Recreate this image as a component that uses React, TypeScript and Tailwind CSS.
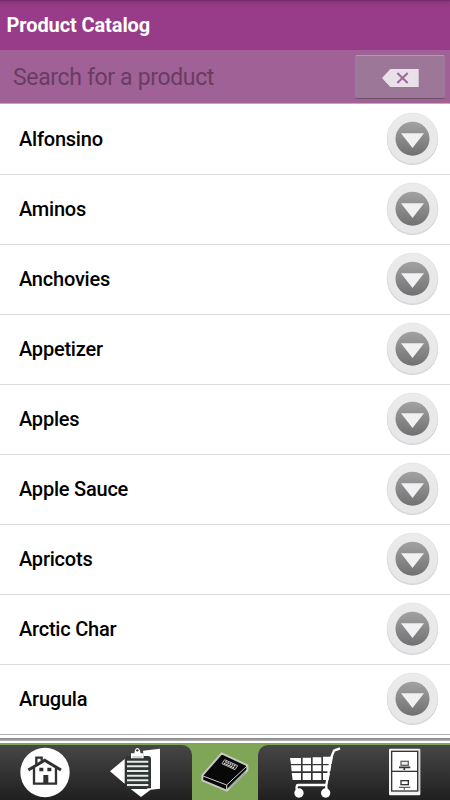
import { useState } from 'react'

const products = [
  'Alfonsino',
  'Aminos',
  'Anchovies',
  'Appetizer',
  'Apples',
  'Apple Sauce',
  'Apricots',
  'Arctic Char',
  'Arugula',
]

function ExpandIcon() {
  return (
    <svg viewBox="0 0 162 162" className="w-[54px] h-[54px]">
      <defs>
        <linearGradient id="ring" x1="0" y1="0" x2="0" y2="1">
          <stop offset="0" stopColor="#ebebeb" />
          <stop offset="1" stopColor="#e7e6e8" />
        </linearGradient>
        <linearGradient id="disc" x1="0" y1="0" x2="0" y2="1">
          <stop offset="0" stopColor="#a2a2a2" />
          <stop offset="1" stopColor="#717171" />
        </linearGradient>
      </defs>
      <circle cx="79.5" cy="82" r="77" fill="#d2d2d2" />
      <circle cx="79.5" cy="79" r="76" fill="url(#ring)" stroke="#e0e0e0" strokeWidth="2" />
      <circle cx="79.5" cy="80" r="51" fill="url(#disc)" />
      <path d="M45 64h69L79.5 108z" fill="#f1f0f2" />
    </svg>
  )
}

function ClearIcon() {
  return (
    <svg viewBox="0 0 111 54" className="w-[37px] h-[18px]">
      <path d="M25 0h85v54H25L0 27z" fill="#e9e0e9" />
      <path d="M46 12l31 30M77 12L46 42" stroke="#9b6995" strokeWidth="6" fill="none" />
    </svg>
  )
}

function HomeIcon() {
  return (
    <svg viewBox="0 0 150 165" className="w-[50px] h-[55px]">
      <circle cx="75" cy="82.5" r="74" fill="#fff" />
      <g fill="none" stroke="#303030" strokeWidth="7">
        <path d="M49 58V38h16v9" />
        <path d="M25 75l49-29 49 29" strokeWidth="9" />
        <path d="M42 68v48h66V68" />
      </g>
      <path d="M58 68h12v11H58zM82 68h12v11H82zM70 90h15v27H70z" fill="#303030" />
    </svg>
  )
}

function ClipboardIcon() {
  return (
    <svg viewBox="0 0 165 165" className="w-[55px] h-[55px]">
      <path d="M6 79l44-37v74z" fill="#fff" />
      <path d="M105 17l51-6v120l-28 3-29 22-31-24h50z" fill="#fff" />
      <path d="M54 33h66q9 0 9 9v88H54z" fill="#303633" />
      <path d="M57 50h64M57 64h64M57 78h64M57 92h64M57 106h64M57 120h64" stroke="#e6eae8" strokeWidth="6" />
      <path d="M69 25h10q2-16 9-16t10 16h9v15H69z" fill="#fff" />
      <circle cx="88" cy="16" r="3.5" fill="#303633" />
      <path d="M73 36h30" stroke="#7b817e" strokeWidth="2" />
    </svg>
  )
}

function BookIcon() {
  return (
    <svg viewBox="0 0 150 165" className="w-[50px] h-[55px]">
      <path d="M65 25l77 36v15l-62 61-73-31V91z" fill="#080808" stroke="#c8c8c8" strokeWidth="6" strokeLinejoin="round" />
      <path d="M9 93l71 27 61-57" fill="none" stroke="#d0d0d0" strokeWidth="3" />
      <path d="M80 120v15" stroke="#b9b9b9" strokeWidth="4" />
      <path d="M88 124l50-48M88 129l47-45" stroke="#777" strokeWidth="2" />
      <path d="M74 44l39 18-8 12-39-18z" fill="#191919" stroke="#bbb" strokeWidth="3" />
      <path d="M76 50l31 14M72 55l31 14" stroke="#d5d5d5" strokeWidth="4" strokeDasharray="5 2" />
    </svg>
  )
}

function CartIcon() {
  return (
    <svg viewBox="0 0 165 165" className="w-[55px] h-[55px]">
      <g fill="#fff">
        <path d="M6 39h33v18H9zM44 38h25v19H44zM74 37h26v20H74zM105 35h30l-4 22h-26z" />
        <path d="M9 61h30v18H11zM44 61h25v18H44zM74 61h26v18H74zM105 61h25l-3 18h-22z" />
        <path d="M11 84h28v21H14zM44 84h25v21H44zM74 84h26v21H74zM105 84h21l-4 21h-17z" />
        <circle cx="33" cy="144" r="14" />
        <circle cx="113" cy="144" r="14" />
      </g>
      <path d="M156 10l-18 7-9 22-14 81H29q-4 0-3 14M115 120v20" fill="none" stroke="#fff" strokeWidth="7" strokeLinejoin="round" />
    </svg>
  )
}

function CabinetIcon() {
  return (
    <svg viewBox="0 0 108 165" className="w-9 h-[55px]">
      <rect x="6" y="11" width="94" height="140" rx="3" fill="#f4f2f5" />
      <path d="M96 14v124" stroke="#d3cfd6" strokeWidth="5" />
      <rect x="14" y="19" width="78" height="119" fill="#fff" stroke="#343434" strokeWidth="4" />
      <path d="M14 79h78" stroke="#343434" strokeWidth="4" />
      <rect x="42" y="49" width="22" height="12" fill="#eee" stroke="#666" strokeWidth="4" />
      <path d="M36 67h34M52 67v8" stroke="#333" strokeWidth="5" />
      <rect x="42" y="107" width="22" height="12" fill="#fff" stroke="#333" strokeWidth="4" />
      <path d="M36 127h34M52 127v7" stroke="#666" strokeWidth="4" />
    </svg>
  )
}

export default function App() {
  const [query, setQuery] = useState('')

  return (
    <div className="w-[450px] h-[800px] flex flex-col overflow-hidden bg-white font-['Roboto',sans-serif]">
      {/* Header */}
      <header className="h-[50px] shrink-0 flex items-center pl-[6.5px] pb-px bg-[#983c89] bg-[linear-gradient(#702966_0px,#8d397f_2px,#983c89_8px)]">
        <h1 className="text-[20px] leading-6 font-bold text-white tracking-[-0.1px]">Product Catalog</h1>
      </header>

      {/* Search */}
      <div className="h-[54px] shrink-0 flex items-start justify-between bg-[#a06296] border-b border-[#c9a5c3] pl-[13px] pr-[5px] pt-[5px]">
        <input
          value={query}
          onChange={e => setQuery(e.target.value)}
          placeholder="Search for a product"
          className="h-11 w-80 text-[23px] tracking-[-0.35px] text-[#5f3659] placeholder:text-[#693c62] placeholder:opacity-100 outline-none"
        />
        <button
          onClick={() => setQuery('')}
          aria-label="Clear"
          className="w-[90px] h-11 flex items-center justify-center pt-px rounded-[2px] bg-[#9d7797] border-t border-b border-t-[#b997b4] border-b-[#705069]"
        >
          <ClearIcon />
        </button>
      </div>

      {/* Product list */}
      <ul className="shrink-0 pt-px">
        {products.map(name => (
          <li key={name} className="h-[70px] flex items-center justify-between pl-[19px] pr-[10px] pb-0.5 border-b border-[#dcdcdc] last:border-[#adadad]">
            <span className="text-[20px] leading-6 font-medium text-black tracking-[-0.22px]">{name}</span>
            <ExpandIcon />
          </li>
        ))}
      </ul>

      {/* Bottom bar */}
      <div className="h-2 shrink-0 pt-[3px] pb-0.5 bg-white">
        <div className="h-[3px] bg-linear-to-b from-[#828282] to-[#b5b5b5]" />
      </div>
      <nav className="h-[57px] shrink-0 flex pt-0.5 bg-[#7fa656]">
        <div className="w-[192px] flex pl-5 rounded-tr-[10px] bg-linear-to-b from-[#474747] to-[#202020]">
          <HomeIcon />
          <div className="pl-[38px]">
            <ClipboardIcon />
          </div>
        </div>
        <div className="w-[66px] flex justify-center">
          <BookIcon />
        </div>
        <div className="w-[192px] flex pl-[30px] pr-[27px] justify-between rounded-tl-[10px] bg-linear-to-b from-[#474747] to-[#202020]">
          <CartIcon />
          <CabinetIcon />
        </div>
      </nav>
    </div>
  )
}
